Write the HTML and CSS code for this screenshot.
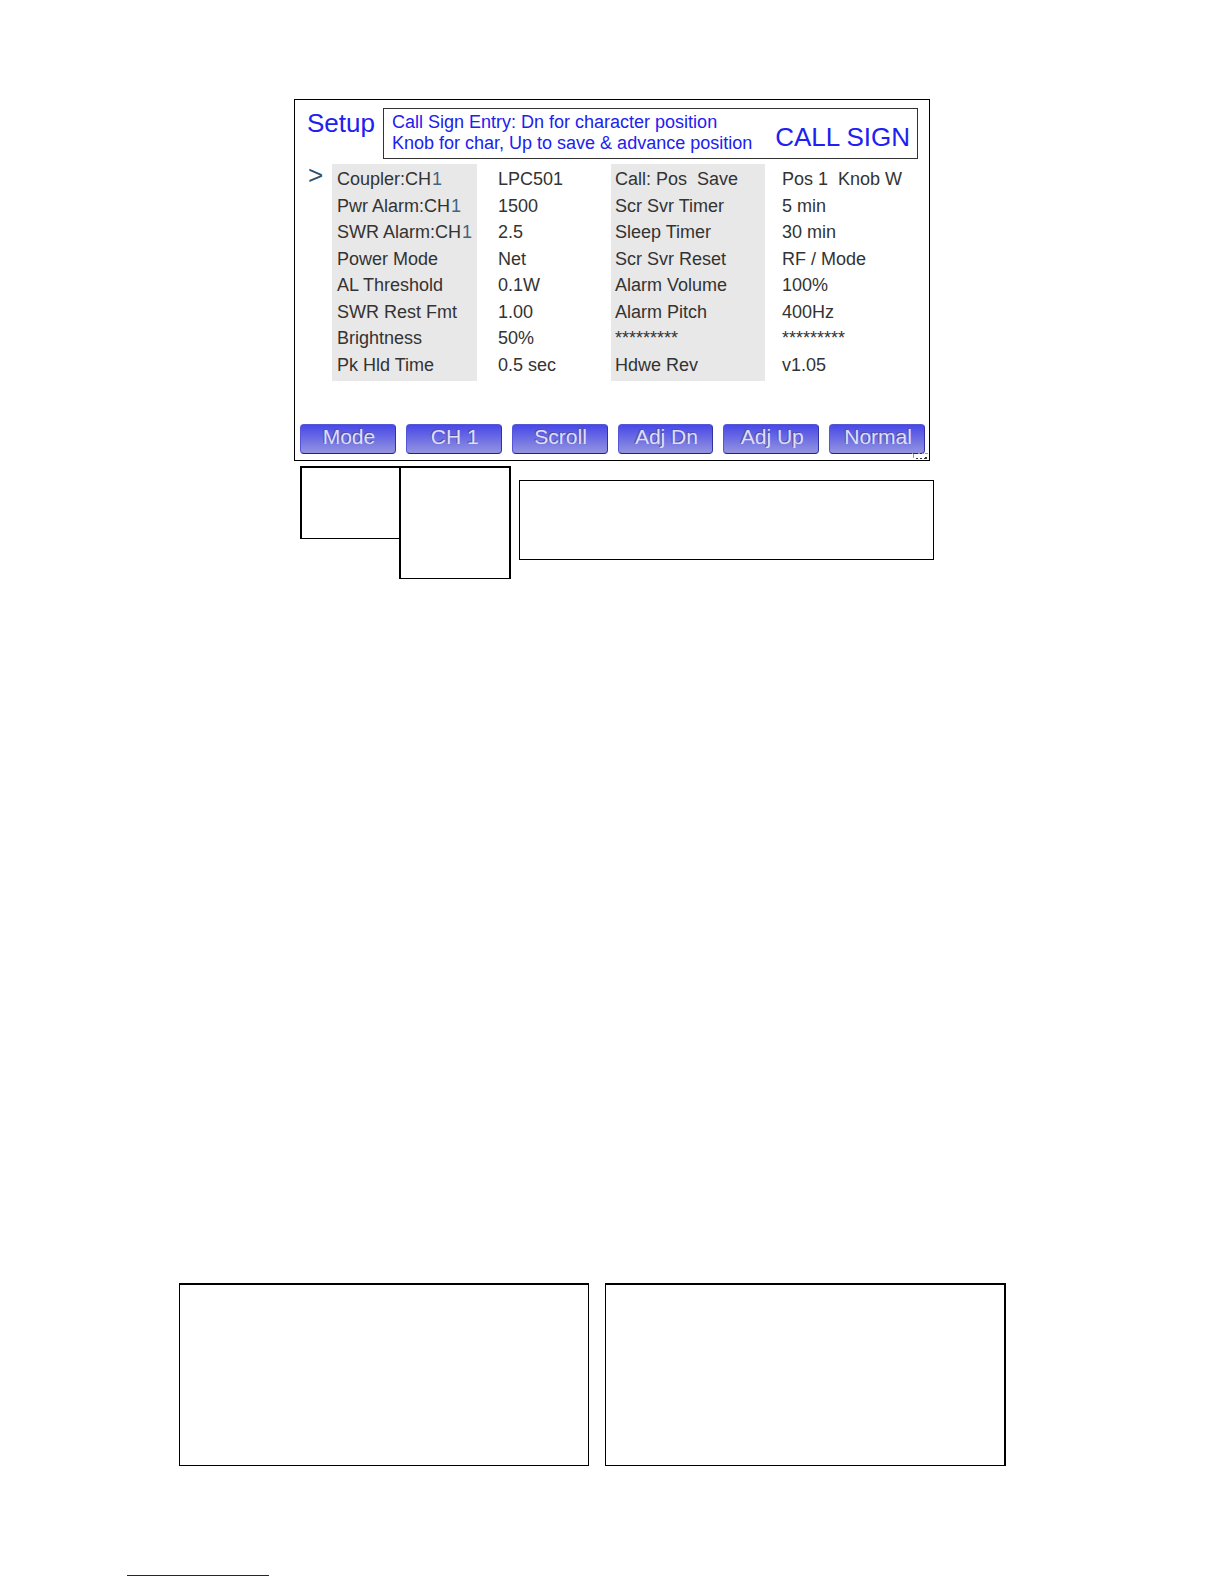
FILE: index.html
```
<!DOCTYPE html>
<html lang="en">
<head>
    <meta charset="utf-8">
    <title>Setup - Call Sign</title>
    <link rel="stylesheet" href="styles.css">
</head>
<body>
    <main class="page">
        <section class="screen">
            <header class="screen-header">
                <h1>Setup</h1>
                <div class="banner">
                    <p>Call Sign Entry: Dn for character position<br>Knob for char, Up to save &amp; advance position</p>
                    <h2>CALL SIGN</h2>
                </div>
            </header>
            <div class="settings">
                <span class="cursor">&gt;</span>
                <table>
                    <tr><th>Coupler:CH<span class="channel">1</span></th><td>LPC501</td><th>Call: Pos&nbsp; Save</th><td>Pos 1&nbsp; Knob W</td></tr>
                    <tr><th>Pwr Alarm:CH<span class="channel">1</span></th><td>1500</td><th>Scr Svr Timer</th><td>5 min</td></tr>
                    <tr><th>SWR Alarm:CH<span class="channel">1</span></th><td>2.5</td><th>Sleep Timer</th><td>30 min</td></tr>
                    <tr><th>Power Mode</th><td>Net</td><th>Scr Svr Reset</th><td>RF / Mode</td></tr>
                    <tr><th>AL Threshold</th><td>0.1W</td><th>Alarm Volume</th><td>100%</td></tr>
                    <tr><th>SWR Rest Fmt</th><td>1.00</td><th>Alarm Pitch</th><td>400Hz</td></tr>
                    <tr><th>Brightness</th><td>50%</td><th>*********</th><td>*********</td></tr>
                    <tr><th>Pk Hld Time</th><td>0.5 sec</td><th>Hdwe Rev</th><td>v1.05</td></tr>
                </table>
            </div>
            <nav class="button-row">
                <button type="button">Mode</button>
                <button type="button">CH 1</button>
                <button type="button">Scroll</button>
                <button type="button">Adj Dn</button>
                <button type="button">Adj Up</button>
                <button type="button">Normal</button>
            </nav>
            <svg class="corner-mark" viewBox="0 0 16 7" aria-hidden="true">
                <path d="M0 .5h1M1.5 1v4M6 .5h2M10 .5h2M13 .5h3" fill="none" stroke="#2de03a"/>
                <path d="M4 5.5h2M8 5.5h2M12 5.5h3M13 4.5h2" fill="none" stroke="#333"/>
            </svg>
        </section>

        <div class="notes">
            <div class="note note-mode"></div>
            <div class="note note-channel"></div>
            <div class="note note-adjust"></div>
        </div>

        <div class="panels">
            <div class="panel"></div>
            <div class="panel panel-right"></div>
        </div>
        <hr class="footer-rule">
    </main>
</body>
</html>
```
FILE: styles.css
```
* {
    box-sizing: border-box;
}
body {
    font-family: "Liberation Sans", Arial, sans-serif;
    background-color: #fff;
    color: #333;
    margin: 0;
}
h1, h2, p {
    font-weight: normal;
    margin: 0;
}
.page {
    padding-top: 99px;
}

/* device display */
.screen {
    position: relative;
    max-width: 636px;
    margin: 0 auto;
    padding: 8px 11px 6px 5px;
    border: 1px solid #000;
}
.screen-header {
    display: flex;
    color: #2020f0;
}
h1 {
    width: 83px;
    padding-left: 7px;
    font-size: 26px;
    line-height: 30px;
}
.banner {
    flex: 1;
    display: flex;
    justify-content: space-between;
    padding: 3px 7px 4px 8px;
    border: 1px solid #333;
}
.banner p {
    font-size: 18px;
    line-height: 21px;
    white-space: nowrap;
}
h2 {
    padding-top: 10px;
    font-size: 26px;
    line-height: 30px;
    white-space: nowrap;
}
.settings {
    display: flex;
    padding-top: 5px;
}
.cursor {
    width: 32px;
    padding-left: 8px;
    color: #2f5370;
    font-size: 26px;
    line-height: 22px;
}
table {
    flex: 1;
    table-layout: fixed;
    border-collapse: collapse;
    font-size: 18px;
    line-height: 22px;
    white-space: nowrap;
}
tr {
    height: 27px;
}
tr:nth-child(even) {
    height: 26px;
}
tr:last-child {
    height: 31px;
}
th, td {
    padding: 4px 0 0;
    text-align: left;
    vertical-align: top;
}
th {
    width: 145px;
    padding-left: 5px;
    background-color: #e8e8e8;
    font-weight: normal;
}
td {
    width: 134px;
    padding-left: 21px;
}
td + th {
    width: 154px;
    padding-left: 4px;
}
th + td:last-child {
    width: auto;
    padding-left: 17px;
}
.channel {
    margin-left: 1px;
    color: #3f6584;
}
.button-row {
    display: grid;
    grid-template-columns: repeat(6, 1fr);
    gap: 10px;
    margin-top: 43px;
    margin-right: -7px;
}
button {
    height: 30px;
    padding: 0 0 4px 2px;
    border: 1px solid #5555d8;
    border-bottom-color: #222280;
    border-right-color: #3333a0;
    border-radius: 4px;
    background: linear-gradient(#4848e8, #9494e0);
    color: #dedef8;
    font-family: inherit;
    font-size: 21px;
    line-height: 24px;
    text-shadow: -1px -1px 0 #5050a0;
    cursor: pointer;
}
.corner-mark {
    position: absolute;
    right: 1px;
    bottom: 0;
    width: 16px;
    height: 7px;
}

/* empty callouts below the display */
.notes {
    display: flex;
    align-items: flex-start;
    max-width: 636px;
    height: 113px;
    margin: 5px auto 0;
    padding-left: 6px;
}
.note {
    border: 1px solid #000;
}
.note-mode {
    width: 99px;
    height: 73px;
    border-width: 2px 0 1px 2px;
}
.note-channel {
    width: 112px;
    height: 113px;
    border-width: 2px 2px 1px;
}
.note-adjust {
    flex: 1;
    height: 80px;
    margin: 14px -4px 0 8px;
}

.panels {
    display: grid;
    grid-template-columns: 410fr 401fr;
    gap: 16px;
    max-width: 1006px;
    margin-top: 704px;
    padding-left: 179px;
}
.panel {
    height: 183px;
    border: 1px solid #000;
    border-top-width: 2px;
}
.panel-right {
    border-right-width: 2px;
}
.footer-rule {
    width: 142px;
    margin: 109px 0 0 127px;
    border: 0;
    border-top: 1px solid #1a1a8c;
}
```
